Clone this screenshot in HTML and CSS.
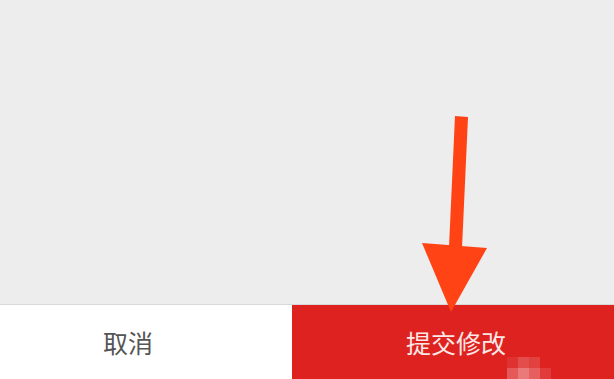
FILE: index.html
```html
<!DOCTYPE html>
<html lang="zh">
<head>
<meta charset="utf-8">
<link rel="stylesheet" href="styles.css">
</head>
<body>
<div class="page">
  <main class="content"></main>
  <footer class="actions">
    <button class="btn cancel">取消</button>
    <button class="btn submit">提交修改</button>
  </footer>
  <svg class="arrow" width="614" height="379" viewBox="0 0 614 379">
    <polygon points="455,116 468,117 462,248 449,247" fill="#ff4314"/>
    <polygon points="422,243 487,248 451,312" fill="#ff4314"/>
  </svg>
  <div class="mosaic">
    <span class="m m1"></span><span class="m m2"></span><span class="m m3"></span>
    <span class="m m4"></span><span class="m m5"></span><span class="m m6"></span><span class="m m7"></span>
  </div>
</div>
</body>
</html>
```
FILE: styles.css
```css
html, body {
  margin: 0;
  padding: 0;
}
body {
  width: 614px;
  height: 379px;
  overflow: hidden;
  background: #ededed;
  font-family: "Noto Sans CJK SC", "Noto Sans", sans-serif;
}
.page {
  position: relative;
  display: flex;
  flex-direction: column;
  width: 614px;
  height: 379px;
}
.content {
  flex: 0 0 304px;
  background: #ededed;
  border-bottom: 1px solid #d9d9d9;
}
.actions {
  flex: 1;
  display: grid;
  grid-template-columns: 292px 1fr;
}
.btn {
  border: 0;
  margin: 0;
  padding: 0;
  font-family: inherit;
  font-size: 25px;
  font-weight: 400;
  line-height: 1;
}
.cancel {
  background: #ffffff;
  color: #555555;
  padding-right: 36px;
}
.submit {
  background: #dd2220;
  color: #fbe8e6;
  padding-left: 6px;
}
.arrow {
  position: absolute;
  left: 0;
  top: 0;
}
.mosaic {
  position: absolute;
  left: 0;
  top: 0;
}
.m {
  position: absolute;
  width: 11px;
  height: 11px;
}
.m1 { left: 507px; top: 357px; background: rgba(255,255,255,0.08); }
.m2 { left: 518px; top: 357px; background: rgba(255,255,255,0.2); }
.m3 { left: 529px; top: 357px; background: rgba(255,255,255,0.14); }
.m4 { left: 507px; top: 368px; background: rgba(255,255,255,0.25); }
.m5 { left: 518px; top: 368px; background: rgba(255,255,255,0.4); }
.m6 { left: 529px; top: 368px; background: rgba(255,255,255,0.28); }
.m7 { left: 540px; top: 368px; background: rgba(255,255,255,0.12); }
```
